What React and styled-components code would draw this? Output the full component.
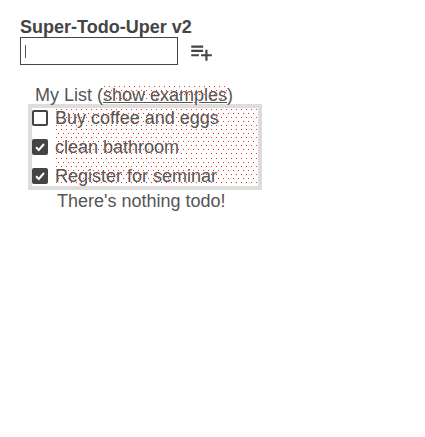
import React from "react";
import styled, { createGlobalStyle } from "styled-components";
import { MdPlaylistAdd } from "react-icons/md";

const Global = createGlobalStyle`
  html, body { margin: 0; padding: 0; background: #fff; }
  body { font-family: "Liberation Sans", Arial, sans-serif; color: #555; }
`;

const dots = `
  background-image:
    radial-gradient(circle at 0.5px 0.5px, #ff3015 0.95px, transparent 1px),
    radial-gradient(circle at 0.5px 0.5px, #ff3015 0.95px, transparent 1px);
  background-size: 5px 8px, 5px 8px;
  background-position: 1px 1px, 3px 5px;
`;

const Page = styled.div`
  padding: 17px 0 0 20px;
`;

const Title = styled.h1`
  margin: 0;
  font-size: 18px;
  font-weight: bold;
  color: #444;
  line-height: 21px;
`;

const InputRow = styled.div`
  display: flex;
  align-items: flex-start;
  gap: 10px;
  margin-top: -1px;
`;

const InputBox = styled.div`
  position: relative;
  width: 156px;
  height: 26px;
  border: 1px solid #444;
`;

const Caret = styled.span`
  position: absolute;
  left: 4px;
  top: 7px;
  width: 1px;
  height: 13px;
  background: #555;
`;

const Field = styled.input`
  width: 100%;
  height: 100%;
  border: none;
  outline: none;
  padding: 0 6px;
  box-sizing: border-box;
  font: inherit;
  background: transparent;
`;

const AddButton = styled.button`
  border: none;
  background: none;
  padding: 0;
  display: flex;
  color: #444;
  margin-top: 2px;
`;

const ListHeader = styled.div`
  margin: 21px 0 0 15px;
  font-size: 18px;
  line-height: 18px;
  color: #555;
`;

const ExampleLink = styled.a`
  color: #555;
  text-decoration: underline;
  ${dots}
`;

const ListBox = styled.ul`
  list-style: none;
  margin: 0 0 0 8px;
  padding: 0;
  width: 226px;
  border: 4px solid #ddd;
`;

const Item = styled.li`
  display: flex;
  align-items: stretch;
`;

const CheckCell = styled.span`
  display: flex;
  align-items: flex-end;
  padding-bottom: 2px;
  width: 23px;
  flex-shrink: 0;
`;

const Box = styled.span`
  width: 16px;
  height: 16px;
  box-sizing: border-box;
  border-radius: 2px;
  display: flex;
  align-items: center;
  justify-content: center;
  border: 2px solid #444;
  background: ${(p) => (p.$checked ? "#444" : "#fff")};
`;

const Label = styled.span`
  flex: 1;
  padding-top: ${(p) => (p.$first ? 0 : 9)}px;
  font-size: 18px;
  line-height: 20px;
  color: #555;
  white-space: nowrap;
  ${dots}
`;

const Empty = styled.div`
  margin: 1px 0 0 37px;
  font-size: 18px;
  line-height: 21px;
  color: #555;
`;

const Check = () => (
  <svg width="12" height="12" viewBox="0 0 12 12">
    <path d="M2 6.2 L4.8 9 L10 3" stroke="#fff" strokeWidth="2" fill="none" />
  </svg>
);

const items = [
  { text: "Buy coffee and eggs", done: false },
  { text: "clean bathroom", done: true },
  { text: "Register for seminar", done: true },
];

export default function App() {
  return (
    <Page>
      <Global />
      <Title>Super-Todo-Uper v2</Title>
      <InputRow>
        <InputBox>
          <Caret />
          <Field aria-label="new todo" />
        </InputBox>
        <AddButton aria-label="add">
          <MdPlaylistAdd size={26} />
        </AddButton>
      </InputRow>
      <ListHeader>
        My List (<ExampleLink href="#">show examples</ExampleLink>)
      </ListHeader>
      <ListBox>
        {items.map((it, i) => (
          <Item key={it.text}>
            <CheckCell>
              <Box $checked={it.done}>{it.done && <Check />}</Box>
            </CheckCell>
            <Label $first={i === 0}>{it.text}</Label>
          </Item>
        ))}
      </ListBox>
      <Empty>There's nothing todo!</Empty>
    </Page>
  );
}
